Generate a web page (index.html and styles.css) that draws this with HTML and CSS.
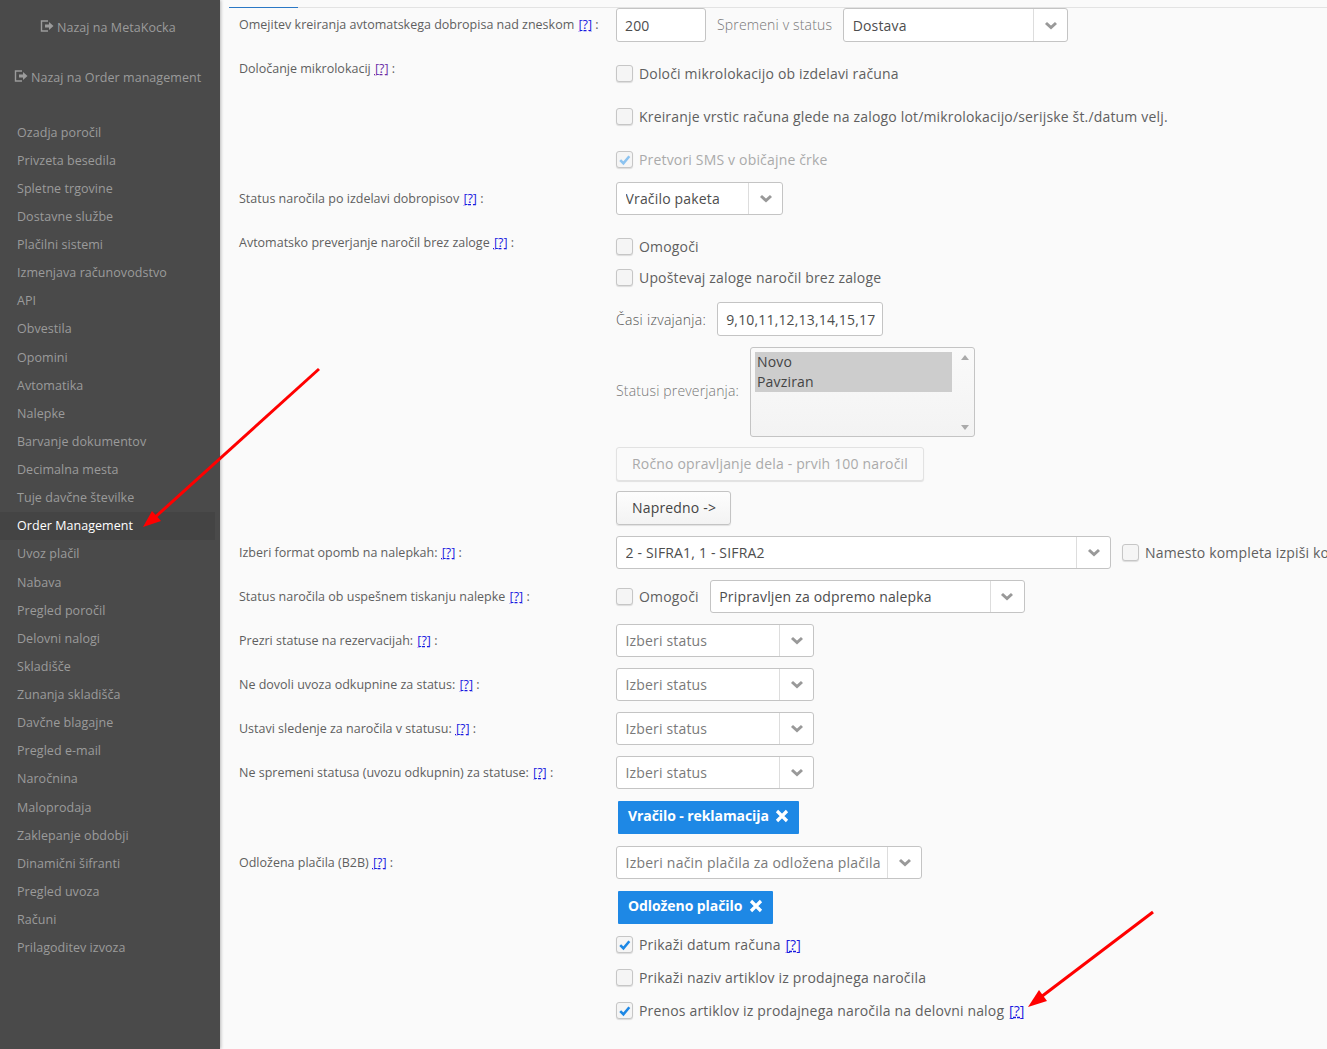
FILE: index.html
```html
<!DOCTYPE html>
<html lang="sl">
<head>
<meta charset="utf-8">
<title>Order Management</title>
<link rel="stylesheet" href="styles.css">
</head>
<body>
<div class="page">
<aside class="sidebar">
  <a class="back back-first"><svg class="back-ico" viewBox="0 0 14 14"><path d="M8 2H1.500v10H8" fill="none" stroke="currentColor" stroke-width="1.4"/><path d="M5 5.500h4V3l4.500 4L9 11V8.500H5z" fill="currentColor"/></svg>Nazaj na MetaKocka</a>
  <a class="back back-second"><svg class="back-ico" viewBox="0 0 14 14"><path d="M8 2H1.500v10H8" fill="none" stroke="currentColor" stroke-width="1.4"/><path d="M5 5.500h4V3l4.500 4L9 11V8.500H5z" fill="currentColor"/></svg>Nazaj na Order management</a>
  <nav class="menu">
    <a>Ozadja poročil</a><a>Privzeta besedila</a><a>Spletne trgovine</a><a>Dostavne službe</a><a>Plačilni sistemi</a><a>Izmenjava računovodstvo</a><a>API</a><a>Obvestila</a><a>Opomini</a><a>Avtomatika</a><a>Nalepke</a><a>Barvanje dokumentov</a><a>Decimalna mesta</a><a>Tuje davčne številke</a><a class="active">Order Management</a><a>Uvoz plačil</a><a>Nabava</a><a>Pregled poročil</a><a>Delovni nalogi</a><a>Skladišče</a><a>Zunanja skladišča</a><a>Davčne blagajne</a><a>Pregled e-mail</a><a>Naročnina</a><a>Maloprodaja</a><a>Zaklepanje obdobji</a><a>Dinamični šifranti</a><a>Pregled uvoza</a><a>Računi</a><a>Prilagoditev izvoza</a>
  </nav>
</aside>
<main class="main">
  <div class="tabline"><span class="tab-active"></span></div>
  <form class="form">
    <div class="row m0">
      <div class="lab lab-first">Omejitev kreiranja avtomatskega dobropisa nad zneskom <a class="q">[?]</a> :</div>
      <div class="ctl inline">
        <div class="input w90">200</div><span class="muted sp-a raise">Spremeni v status</span>
        <div class="select w225 tall"><span>Dostava</span><i class="arrow"><svg viewBox="0 0 14 9"><path d="M2 2l5 4.500L12 2" /></svg></i></div>
      </div>
    </div>
    <div class="row m23">
      <div class="lab lab-c lab-up">Določanje mikrolokacij <a class="q v">[?]</a> :</div>
      <div class="ctl">
        <label class="chk"><i class="box"></i>Določi mikrolokacijo ob izdelavi računa</label>
        <label class="chk m26"><i class="box"></i>Kreiranje vrstic računa glede na zalogo lot/mikrolokacijo/serijske št./datum velj.</label>
        <label class="chk m26 dis"><i class="box on"><svg viewBox="0 0 14 14"><path d="M3 7.500l3 3 5.500-6.500"/></svg></i>Pretvori SMS v običajne črke</label>
      </div>
    </div>
    <div class="row m14">
      <div class="lab">Status naročila po izdelavi dobropisov <a class="q">[?]</a> :</div>
      <div class="ctl"><div class="select w167"><span>Vračilo paketa</span><i class="arrow"><svg viewBox="0 0 14 9"><path d="M2 2l5 4.500L12 2"/></svg></i></div></div>
    </div>
    <div class="row m23">
      <div class="lab lab-c">Avtomatsko preverjanje naročil brez zaloge <a class="q">[?]</a> :</div>
      <div class="ctl">
        <label class="chk"><i class="box"></i>Omogoči</label>
        <label class="chk m14"><i class="box"></i>Upoštevaj zaloge naročil brez zaloge</label>
        <div class="inline m16"><span class="lbl-dark sp-b">Časi izvajanja:</span><div class="input w166">9,10,11,12,13,14,15,17</div></div>
        <div class="inline m11 listrow"><span class="muted sp-c raise-more">Statusi preverjanja:</span>
          <div class="listbox"><div class="opts"><div>Novo</div><div>Pavziran</div></div><div class="scroll"><i class="up"></i><i class="down"></i></div></div>
        </div>
        <div class="btn dis-btn m10">Ročno opravljanje dela - prvih 100 naročil</div>
        <div class="btn adv-btn m10">Napredno -&gt;</div>
      </div>
    </div>
    <div class="row m11">
      <div class="lab">Izberi format opomb na nalepkah: <a class="q">[?]</a> :</div>
      <div class="ctl inline nowrap">
        <div class="select w495"><span>2 - SIFRA1, 1 - SIFRA2</span><i class="arrow"><svg viewBox="0 0 14 9"><path d="M2 2l5 4.500L12 2"/></svg></i></div>
        <label class="chk sp-d"><i class="box"></i>Namesto kompleta izpiši komponente</label>
      </div>
    </div>
    <div class="row m11">
      <div class="lab">Status naročila ob uspešnem tiskanju nalepke <a class="q">[?]</a> :</div>
      <div class="ctl inline">
        <label class="chk"><i class="box"></i>Omogoči</label>
        <div class="select w315 sp-e"><span>Pripravljen za odpremo nalepka</span><i class="arrow"><svg viewBox="0 0 14 9"><path d="M2 2l5 4.500L12 2"/></svg></i></div>
      </div>
    </div>
    <div class="row m11">
      <div class="lab">Prezri statuse na rezervacijah: <a class="q">[?]</a> :</div>
      <div class="ctl"><div class="select w198 ph"><span>Izberi status</span><i class="arrow"><svg viewBox="0 0 14 9"><path d="M2 2l5 4.500L12 2"/></svg></i></div></div>
    </div>
    <div class="row m11">
      <div class="lab">Ne dovoli uvoza odkupnine za status: <a class="q">[?]</a> :</div>
      <div class="ctl"><div class="select w198 ph"><span>Izberi status</span><i class="arrow"><svg viewBox="0 0 14 9"><path d="M2 2l5 4.500L12 2"/></svg></i></div></div>
    </div>
    <div class="row m11">
      <div class="lab">Ustavi sledenje za naročila v statusu: <a class="q">[?]</a> :</div>
      <div class="ctl"><div class="select w198 ph"><span>Izberi status</span><i class="arrow"><svg viewBox="0 0 14 9"><path d="M2 2l5 4.500L12 2"/></svg></i></div></div>
    </div>
    <div class="row m11">
      <div class="lab">Ne spremeni statusa (uvozu odkupnin) za statuse: <a class="q">[?]</a> :</div>
      <div class="ctl">
        <div class="select w198 ph"><span>Izberi status</span><i class="arrow"><svg viewBox="0 0 14 9"><path d="M2 2l5 4.500L12 2"/></svg></i></div>
        <div class="tag m12">Vračilo - reklamacija<svg class="x" viewBox="0 0 14 14"><path d="M2 2l10 10M12 2L2 12"/></svg></div>
      </div>
    </div>
    <div class="row m12">
      <div class="lab">Odložena plačila (B2B) <a class="q">[?]</a> :</div>
      <div class="ctl">
        <div class="select w306 ph wide"><span>Izberi način plačila za odložena plačila</span><i class="arrow"><svg viewBox="0 0 14 9"><path d="M2 2l5 4.500L12 2"/></svg></i></div>
        <div class="tag m12">Odloženo plačilo<svg class="x" viewBox="0 0 14 14"><path d="M2 2l10 10M12 2L2 12"/></svg></div>
        <label class="chk m12"><i class="box on"><svg viewBox="0 0 14 14"><path d="M3 7.500l3 3 5.500-6.500"/></svg></i>Prikaži datum računa&nbsp;<a class="q big">[?]</a></label>
        <label class="chk m16b"><i class="box"></i>Prikaži naziv artiklov iz prodajnega naročila</label>
        <label class="chk m16b"><i class="box on"><svg viewBox="0 0 14 14"><path d="M3 7.500l3 3 5.500-6.500"/></svg></i>Prenos artiklov iz prodajnega naročila na delovni nalog&nbsp;<a class="q big">[?]</a></label>
      </div>
    </div>
  </form>
</main>
<svg class="annot" viewBox="0 0 1327 1049">
  <path d="M319 369L152 520" class="ln"/><path d="M143 527l18-6-9-10z" class="hd"/>
  <path d="M1153 912L1037 1000" class="ln"/><path d="M1028 1007l19-6-8-11z" class="hd"/>
</svg>
</div>
</body>
</html>
```
FILE: styles.css
```css
* { box-sizing: border-box; }
html, body { margin: 0; padding: 0; height: 100%; }
body { font-family: "Open Sans", sans-serif; background: #fafafa; color: #5f5f5f; overflow: hidden; }
.page { position: relative; display: flex; width: 1327px; height: 1049px; overflow: hidden; }

.sidebar { width: 220px; flex: none; background: #4a4a4a; color: #9b9b9b; font-size: 12.5px; letter-spacing: .05px; box-shadow: 1px 0 3px rgba(0,0,0,.25); z-index: 1; }
.back { display: block; white-space: nowrap; }
.back-first { padding: 18px 0 0 40px; line-height: 20px; }
.back-second { padding: 30px 0 0 14px; line-height: 20px; }
.back-ico { width: 14px; height: 14px; margin-right: 3px; vertical-align: -1px; }
.menu { display: block; margin-top: 30.6px; }
.menu a { display: block; height: 28.125px; line-height: 28px; padding-left: 17px; margin-right: 5px; }
.menu a.active { background: #444; color: #fff; }

.main { flex: 1; min-width: 0; padding-left: 9px; }
.tabline { height: 8px; border-bottom: 1px solid #e3e3e3; position: relative; }
.tab-active { position: absolute; left: 0; bottom: -1px; width: 69px; height: 1px; background: #2b78c5; }
.form { padding-left: 10px; }
.row { display: grid; grid-template-columns: 377px 1fr; width: 1098px; }
.lab { font-size: 12.5px; line-height: 18px; padding-top: 8px; color: #5f5f5f; white-space: nowrap; }
.lab-c { padding-top: 0; margin-top: -4px; }
.lab-up { margin-top: -5px; }
.q { color: #1a1ae0; text-decoration: underline dashed; font-size: 12.5px; padding-left: 1px; }
.q.v { color: #6a2fa8; }
.q.big { font-size: 14px; letter-spacing: .1px; }
.ctl { font-size: 14px; letter-spacing: .17px; min-width: 0; }
.inline { display: flex; align-items: center; }
.nowrap { white-space: nowrap; }

.m0 { margin-top: 0; }
.m10 { margin-top: 10px; }
.m11 { margin-top: 11px; }
.m12 { margin-top: 12px; }
.m14 { margin-top: 14px; }
.m16 { margin-top: 16px; }
.m16b { margin-top: 16px; }
.m23 { margin-top: 23px; }
.m26 { margin-top: 26px; }

.input, .select { flex: none; height: 33px; border: 1px solid #c4c4c4; border-radius: 3px; background: #fff; color: #4d4d4d; display: flex; align-items: center; }
.input { height: 34px; padding-left: 8px; }
.select.tall { height: 34px; }
.w90 { width: 90px; }
.w166 { width: 166px; }
.select { position: relative; padding-left: 8.5px; white-space: nowrap; }
.select span { flex: 1; min-width: 0; overflow: hidden; }
.ph { color: #7a7a7a; }
.wide { letter-spacing: .22px; }
.arrow { flex: none; width: 34px; height: 100%; border-left: 1px solid #ddd; display: flex; align-items: center; justify-content: center; }
.arrow svg { width: 14px; height: 9px; fill: none; stroke: #999; stroke-width: 3; }
.w225 { width: 225px; }
.w167 { width: 167px; }
.w495 { width: 495px; }
.w315 { width: 315px; }
.w198 { width: 198px; }
.w306 { width: 306px; }

.muted { color: #777; font-weight: 300; letter-spacing: .16px; white-space: nowrap; }
.raise { padding-bottom: 2px; }
.raise-more { padding-bottom: 4px; }
.lbl-dark { color: #555; font-weight: 300; letter-spacing: .3px; white-space: nowrap; }
.sp-a { margin: 0 11px; }
.sp-b { margin-right: 11px; }
.sp-c { margin-right: 11px; }
.sp-d { margin-left: 11px; }
.sp-e { margin-left: 11px; }

.chk { display: flex; align-items: center; height: 17px; color: #5f5f5f; white-space: nowrap; }
.chk.dis { color: #aaa; }
.box { flex: none; width: 17px; height: 17px; margin-right: 6px; border: 1px solid #c6c6c6; border-radius: 3px; background: #f5f5f5; box-shadow: 0 1px 1px rgba(0,0,0,.12); display: flex; }
.box svg { width: 15px; height: 15px; fill: none; stroke: #1e88e5; stroke-width: 2.4; }
.dis .box svg { stroke: #8cc3f0; }

.listrow { align-items: center; }
.listbox { flex: none; width: 225px; height: 90px; border: 1px solid #c4c4c4; border-radius: 3px; background: linear-gradient(#fafafa, #f3f3f3); display: flex; padding: 4px; color: #444; line-height: 20px; }
.opts { width: 197px; }
.opts div { background: #cdcdcd; padding-left: 2px; }
.scroll { flex: 1; position: relative; }
.up, .down { position: absolute; right: 1px; width: 0; height: 0; border-left: 4px solid transparent; border-right: 4px solid transparent; }
.up { top: 3px; border-bottom: 5px solid #aaa; }
.down { bottom: 2px; border-top: 5px solid #aaa; }

.btn { display: flex; align-items: center; height: 34px; padding: 0 15px 2px; border: 1px solid #c4c4c4; border-radius: 3px; white-space: nowrap; background: linear-gradient(#fdfdfd, #f3f3f3); color: #444; box-shadow: 0 1px 1px rgba(0,0,0,.1); }
.dis-btn { width: 308px; background: #fafafa; color: #aaa; border-color: #e2e2e2; }
.adv-btn { width: 115px; }

.tag { display: flex; align-items: center; width: max-content; height: 33px; padding: 0 10px 5px; margin-left: 2px; background: #1e88e5; color: #fff; font-weight: 700; border-radius: 1px; letter-spacing: -.08px; }
.x { width: 14px; height: 14px; margin: 2px 0 0 6.5px; fill: none; stroke: #fff; stroke-width: 3.2; }

.annot { position: absolute; left: 0; top: 0; width: 1327px; height: 1049px; z-index: 2; pointer-events: none; }
.ln { fill: none; stroke: #f00; stroke-width: 3; }
.hd { fill: #f00; }
```
